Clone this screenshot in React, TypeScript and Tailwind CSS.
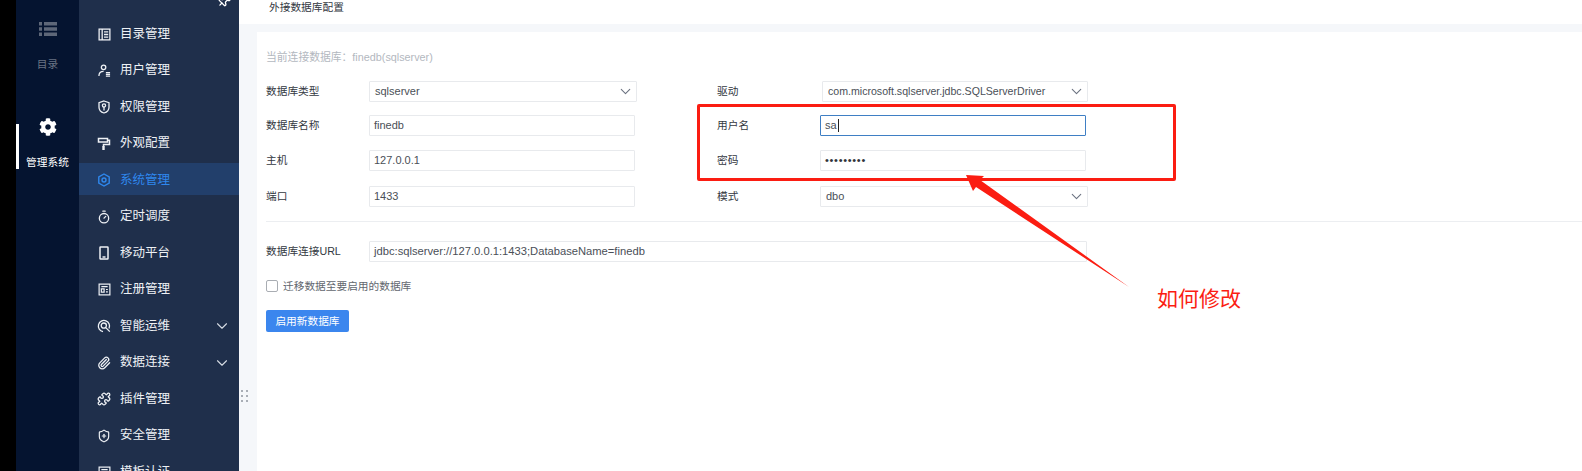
import React from 'react';
import { ChevronDown, Paperclip, Pin, Puzzle, ShieldPlus, Timer } from 'lucide-react';
import { FaCog } from 'react-icons/fa';

const FONT = "font-['Liberation_Sans','Noto_Sans_CJK_SC',sans-serif]";

const IconCatalog = () => (
  <svg viewBox="0 0 14 14" className="h-[13px] w-[13px]" fill="none" stroke="currentColor" strokeWidth="1.4">
    <rect x="1.2" y="1.2" width="11.6" height="11.6" />
    <path d="M4.5 1.2v11.6M6.5 4.2h4.5M6.5 7h4.5M6.5 9.8h4.5" />
  </svg>
);

const IconUser = () => (
  <svg viewBox="0 0 14 14" className="h-[13px] w-[13px]" fill="none" stroke="currentColor" strokeWidth="1.4">
    <circle cx="6" cy="3.6" r="2.4" />
    <path d="M1 13c0-3 2-5 5-5M8.5 9.2h4.5M8.5 11.2h4.5M8.5 13h4.5" />
  </svg>
);

const IconShieldKey = () => (
  <svg viewBox="0 0 14 14" className="h-[14px] w-[14px]" fill="none" stroke="currentColor" strokeWidth="1.3">
    <path d="M7 1l5 1.6v4.6c0 3-2.2 5-5 5.8-2.8-.8-5-2.8-5-5.8V2.6z" />
    <circle cx="7" cy="5.4" r="1.6" />
    <path d="M7 7v3.4" />
  </svg>
);

const IconRoller = () => (
  <svg viewBox="0 0 14 14" className="h-[14px] w-[14px]" fill="none" stroke="currentColor" strokeWidth="1.5">
    <path d="M1.5 1.5h9v3.6h-9zM10.5 3.3h2v4.2H6.5v2" />
    <path d="M6.5 9v4" strokeWidth="2.4" />
  </svg>
);

const IconGear = () => (
  <svg viewBox="0 0 14 14" className="h-[14px] w-[14px]" fill="none" stroke="currentColor" strokeWidth="1.4">
    <path d="M7 1l5.2 3v6L7 13l-5.2-3V4z" />
    <circle cx="7" cy="7" r="2" />
  </svg>
);

const IconPhone = () => (
  <svg viewBox="0 0 14 14" className="h-[14px] w-[14px]" fill="none" stroke="currentColor" strokeWidth="1.5">
    <rect x="3" y="1" width="8" height="12" rx="0.6" />
    <path d="M5.5 11h3" />
  </svg>
);

const IconRegister = () => (
  <svg viewBox="0 0 14 14" className="h-[13px] w-[13px]" fill="none" stroke="currentColor" strokeWidth="1.3">
    <rect x="1.2" y="1.2" width="11.6" height="11.6" />
    <path d="M3.6 4h6.8M3.6 6.4h3v3.4h-3zM8.6 7h2M8.6 9.6h2" />
  </svg>
);

const IconOps = () => (
  <svg viewBox="0 0 14 14" className="h-[14px] w-[14px]" fill="none" stroke="currentColor" strokeWidth="1.3">
    <path d="M12 9.5A5.6 5.6 0 1 0 6 12.6" />
    <circle cx="6.8" cy="6.6" r="2.6" />
    <path d="M8.8 8.6l4 4" />
  </svg>
);

const IconRail = () => (
  <svg viewBox="0 0 18 14" className="h-[14px] w-[18px]" fill="currentColor">
    <path d="M0 0h3v3.4H0zM5 0h13v3.4H5zM0 5.3h3v3.4H0zM5 5.3h13v3.4H5zM0 10.6h3V14H0zM5 10.6h13V14H5z" />
  </svg>
);

const lucideSize = 'h-[14px] w-[14px]';

const MENU = [
  { label: '目录管理', icon: <IconCatalog /> },
  { label: '用户管理', icon: <IconUser /> },
  { label: '权限管理', icon: <IconShieldKey /> },
  { label: '外观配置', icon: <IconRoller /> },
  { label: '系统管理', icon: <IconGear />, active: true },
  { label: '定时调度', icon: <Timer className={lucideSize} strokeWidth={2.2} /> },
  { label: '移动平台', icon: <IconPhone /> },
  { label: '注册管理', icon: <IconRegister /> },
  { label: '智能运维', icon: <IconOps />, more: true },
  { label: '数据连接', icon: <Paperclip className={lucideSize} strokeWidth={2.2} />, more: true },
  { label: '插件管理', icon: <Puzzle className={lucideSize} strokeWidth={2.2} /> },
  { label: '安全管理', icon: <ShieldPlus className={lucideSize} strokeWidth={2} /> },
  { label: '模板认证', icon: <IconRegister /> },
];

const Field = ({ children, focused, select, className = '', textClass = 'text-[11px]' }: { children: React.ReactNode; focused?: boolean; select?: boolean; className?: string; textClass?: string }) => (
  <div
    className={`flex h-[21px] items-center justify-between rounded-[1px] border text-[#4a4f57] ${textClass} ${
      select ? 'pl-[5px] pr-[2px]' : 'pl-[4px] pr-[7px]'
    } ${focused ? 'border-[#3f7fc4]' : 'border-[#e8eaed]'} ${className}`}
  >
    <span className="flex items-center whitespace-nowrap">{children}</span>
    {select && <ChevronDown className="h-[17px] w-[17px] text-[#6b7280]" strokeWidth={1.5} />}
  </div>
);

const Row = ({ label, children, className = '' }: { label: string; children: React.ReactNode; className?: string }) => (
  <div className={`flex items-center ${className}`}>
    <div className="w-[103px] shrink-0 text-[10.7px] text-[#33383f]">{label}</div>
    {children}
  </div>
);

const App = () => {
  return (
    <div className={`relative flex h-[471px] w-[1582px] overflow-hidden bg-white ${FONT}`}>
      <div className="w-[16px] shrink-0 bg-black" />

      <div className="flex w-[63px] shrink-0 flex-col items-center bg-[#051430]">
        <div className="mt-[22px] text-[#5e6778]">
          <IconRail />
        </div>
        <div className="mt-[20px] text-[10.7px] text-[#6b7484]">目录</div>
        <div className="relative mt-[43px] flex w-full flex-col items-center pt-[3px] pb-[8px] text-white">
          <div className="absolute top-[9px] left-0 h-[45px] w-[3px] bg-white" />
          <FaCog className="h-[18px] w-[18px]" />
          <div className="mt-[18px] text-[10.7px]">管理系统</div>
        </div>
      </div>

      <div className="relative w-[160px] shrink-0 overflow-hidden bg-[#1f2f4b] pt-[17px]">
        <Pin className="absolute top-[-6px] right-[8px] h-[14px] w-[14px] rotate-45 text-white" strokeWidth={2.2} />
        {MENU.map((item) => (
          <div
            key={item.label}
            className={`mb-[4.5px] flex h-[32px] items-center pt-[2px] pl-[18px] pr-[8px] text-[12.5px] ${
              item.active ? 'bg-[#223f6b] text-[#2f88ee]' : 'text-[#eef1f5]'
            }`}
          >
            <span className="flex w-[14px] justify-center">{item.icon}</span>
            <span className="ml-[9px]">{item.label}</span>
            {item.more && <ChevronDown className="ml-auto h-[18px] w-[18px] text-[#d5dae2]" strokeWidth={1.5} />}
          </div>
        ))}
      </div>

      <div className="flex min-w-0 flex-1 flex-col bg-[#f5f7fa]">
        <div className="h-[24px] shrink-0 bg-white pl-[30px] text-[10.7px] leading-[15px] text-[#33383f]">外接数据库配置</div>
        <div className="mt-[8px] ml-[18px] flex-1 bg-white pt-[18px] pl-[9px]">
          <div className="text-[10.8px] leading-[14px] text-[#b3b8c0]">当前连接数据库：finedb(sqlserver)</div>

          <div className="mt-[17px] flex">
            <div className="flex w-[451px] flex-col">
              <Row label="数据库类型"><Field select className="w-[268px]">sqlserver</Field></Row>
              <Row label="数据库名称" className="mt-[13px]"><Field className="w-[266px]">finedb</Field></Row>
              <Row label="主机" className="mt-[14px]"><Field className="w-[266px]">127.0.0.1</Field></Row>
              <Row label="端口" className="mt-[15px]"><Field className="w-[266px]">1433</Field></Row>
            </div>
            <div className="flex flex-col">
              <Row label="驱动"><Field select className="ml-[2px] w-[266px]" textClass="text-[10.6px]">com.microsoft.sqlserver.jdbc.SQLServerDriver</Field></Row>
              <Row label="用户名" className="mt-[13px]">
                <Field focused className="w-[266px]">sa<span className="ml-[1px] h-[13px] w-px bg-[#222]" /></Field>
              </Row>
              <Row label="密码" className="mt-[14px]"><Field className="w-[266px] tracking-[0.7px] text-[#30343a]">•••••••••</Field></Row>
              <Row label="模式" className="mt-[15px]"><Field select className="w-[268px]">dbo</Field></Row>
            </div>
          </div>

          <div className="mt-[14px] h-px bg-[#eceef1]" />

          <Row label="数据库连接URL" className="mt-[19px]"><Field className="w-[718px]" textClass="text-[11.2px]">jdbc:sqlserver://127.0.0.1:1433;DatabaseName=finedb</Field></Row>

          <div className="mt-[16px] flex items-center">
            <div className="h-[12px] w-[12px] rounded-[2px] border border-[#a9adb3]" />
            <span className="ml-[5px] text-[10.7px] text-[#62676e]">迁移数据至要启用的数据库</span>
          </div>

          <button className="mt-[16px] flex h-[22px] w-[83px] items-center justify-center rounded-[2px] bg-[#3b86ee] text-[10.7px] text-white">
            启用新数据库
          </button>
        </div>
      </div>

      <div className="absolute top-[390px] left-[241px] grid grid-cols-2 gap-x-[3px] gap-y-[3px]">
        {[0, 1, 2, 3, 4, 5].map((n) => (
          <span key={n} className="h-[2px] w-[2px] bg-[#a9aeb6]" />
        ))}
      </div>

      <div className="absolute top-[104px] left-[697px] h-[77px] w-[479px] rounded-[2px] border-[3px] border-[#fb1d12]" />
      <svg className="absolute top-0 left-0 h-[471px] w-[1582px]" viewBox="0 0 1582 471" fill="#fb1d12">
        <polygon points="966,175 984,176 980,180 1129,287 976,187 973,191" />
      </svg>
      <div className="absolute top-[286px] left-[1157px] text-[21px] leading-[26px] text-[#fb1d12]">如何修改</div>
    </div>
  );
};

export default App;
